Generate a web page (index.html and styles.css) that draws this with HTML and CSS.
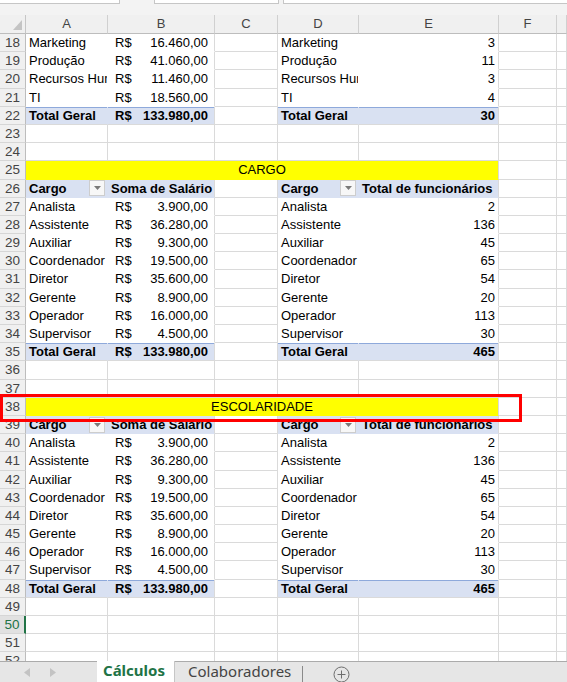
FILE: index.html
```html
<!DOCTYPE html>
<html lang="pt-BR">
<head>
    <meta charset="UTF-8">
    <title>Cálculos</title>
    <link rel="stylesheet" href="styles.css">
</head>
<body>
  <div class="topbar">
    <div class="box box1"></div>
    <div class="box box2"></div>
    <div class="box box3"></div>
  </div>

  <div class="sheet">
    <div class="row colhead">
      <div class="corner"><svg width="9" height="10" viewBox="0 0 9 10"><polygon points="9,0 9,10 0,10" fill="#c4c4c4"/></svg></div>
      <div class="ch">A</div><div class="ch">B</div><div class="ch">C</div><div class="ch">D</div><div class="ch">E</div><div class="ch">F</div><div class="ch"></div>
    </div>

    <!-- departamentos -->
    <div class="row"><div class="rh">18</div><div class="c pv in">Marketing</div><div class="c pv last money"><span>R$</span><span>16.460,00</span></div><div class="c"></div><div class="c pv in">Marketing</div><div class="c pv last num">3</div><div class="c"></div><div class="c"></div></div>
    <div class="row"><div class="rh">19</div><div class="c pv in">Produção</div><div class="c pv last money"><span>R$</span><span>41.060,00</span></div><div class="c"></div><div class="c pv in">Produção</div><div class="c pv last num">11</div><div class="c"></div><div class="c"></div></div>
    <div class="row"><div class="rh">20</div><div class="c pv in clip">Recursos Humanos</div><div class="c pv last money"><span>R$</span><span>11.460,00</span></div><div class="c"></div><div class="c pv in clip">Recursos Humanos</div><div class="c pv last num">3</div><div class="c"></div><div class="c"></div></div>
    <div class="row"><div class="rh">21</div><div class="c pv in">TI</div><div class="c pv last money"><span>R$</span><span>18.560,00</span></div><div class="c"></div><div class="c pv in">TI</div><div class="c pv last num">4</div><div class="c"></div><div class="c"></div></div>
    <div class="row"><div class="rh">22</div><div class="c tot">Total Geral</div><div class="c tot last money"><span>R$</span><span>133.980,00</span></div><div class="c"></div><div class="c tot">Total Geral</div><div class="c tot last num">30</div><div class="c"></div><div class="c"></div></div>
    <div class="row"><div class="rh">23</div><div class="c"></div><div class="c"></div><div class="c"></div><div class="c"></div><div class="c"></div><div class="c"></div><div class="c"></div></div>
    <div class="row"><div class="rh">24</div><div class="c"></div><div class="c"></div><div class="c"></div><div class="c"></div><div class="c"></div><div class="c"></div><div class="c"></div></div>

    <!-- cargo -->
    <div class="row"><div class="rh">25</div><div class="c band">CARGO</div><div class="c"></div><div class="c"></div></div>
    <div class="row"><div class="rh">26</div><div class="c hd filt"><span>Cargo</span><span class="dd"><svg width="7" height="4" viewBox="0 0 7 4"><polygon points="0,0 7,0 3.5,4" fill="#7a7a7a"/></svg></span></div><div class="c hd last">Soma de Salário</div><div class="c"></div><div class="c hd filt"><span>Cargo</span><span class="dd"><svg width="7" height="4" viewBox="0 0 7 4"><polygon points="0,0 7,0 3.5,4" fill="#7a7a7a"/></svg></span></div><div class="c hd last">Total de funcionários</div><div class="c"></div><div class="c"></div></div>
    <div class="row"><div class="rh">27</div><div class="c pv in">Analista</div><div class="c pv last money"><span>R$</span><span>3.900,00</span></div><div class="c"></div><div class="c pv in">Analista</div><div class="c pv last num">2</div><div class="c"></div><div class="c"></div></div>
    <div class="row"><div class="rh">28</div><div class="c pv in">Assistente</div><div class="c pv last money"><span>R$</span><span>36.280,00</span></div><div class="c"></div><div class="c pv in">Assistente</div><div class="c pv last num">136</div><div class="c"></div><div class="c"></div></div>
    <div class="row"><div class="rh">29</div><div class="c pv in">Auxiliar</div><div class="c pv last money"><span>R$</span><span>9.300,00</span></div><div class="c"></div><div class="c pv in">Auxiliar</div><div class="c pv last num">45</div><div class="c"></div><div class="c"></div></div>
    <div class="row"><div class="rh">30</div><div class="c pv in">Coordenador</div><div class="c pv last money"><span>R$</span><span>19.500,00</span></div><div class="c"></div><div class="c pv in">Coordenador</div><div class="c pv last num">65</div><div class="c"></div><div class="c"></div></div>
    <div class="row"><div class="rh">31</div><div class="c pv in">Diretor</div><div class="c pv last money"><span>R$</span><span>35.600,00</span></div><div class="c"></div><div class="c pv in">Diretor</div><div class="c pv last num">54</div><div class="c"></div><div class="c"></div></div>
    <div class="row"><div class="rh">32</div><div class="c pv in">Gerente</div><div class="c pv last money"><span>R$</span><span>8.900,00</span></div><div class="c"></div><div class="c pv in">Gerente</div><div class="c pv last num">20</div><div class="c"></div><div class="c"></div></div>
    <div class="row"><div class="rh">33</div><div class="c pv in">Operador</div><div class="c pv last money"><span>R$</span><span>16.000,00</span></div><div class="c"></div><div class="c pv in">Operador</div><div class="c pv last num">113</div><div class="c"></div><div class="c"></div></div>
    <div class="row"><div class="rh">34</div><div class="c pv in">Supervisor</div><div class="c pv last money"><span>R$</span><span>4.500,00</span></div><div class="c"></div><div class="c pv in">Supervisor</div><div class="c pv last num">30</div><div class="c"></div><div class="c"></div></div>
    <div class="row"><div class="rh">35</div><div class="c tot">Total Geral</div><div class="c tot last money"><span>R$</span><span>133.980,00</span></div><div class="c"></div><div class="c tot">Total Geral</div><div class="c tot last num">465</div><div class="c"></div><div class="c"></div></div>
    <div class="row"><div class="rh">36</div><div class="c"></div><div class="c"></div><div class="c"></div><div class="c"></div><div class="c"></div><div class="c"></div><div class="c"></div></div>
    <div class="row"><div class="rh">37</div><div class="c"></div><div class="c"></div><div class="c"></div><div class="c"></div><div class="c"></div><div class="c"></div><div class="c"></div></div>

    <!-- escolaridade -->
    <div class="row"><div class="rh">38</div><div class="c band">ESCOLARIDADE</div><div class="c"></div><div class="c"></div></div>
    <div class="row"><div class="rh">39</div><div class="c hd filt"><span>Cargo</span><span class="dd"><svg width="7" height="4" viewBox="0 0 7 4"><polygon points="0,0 7,0 3.5,4" fill="#7a7a7a"/></svg></span></div><div class="c hd last">Soma de Salário</div><div class="c"></div><div class="c hd filt"><span>Cargo</span><span class="dd"><svg width="7" height="4" viewBox="0 0 7 4"><polygon points="0,0 7,0 3.5,4" fill="#7a7a7a"/></svg></span></div><div class="c hd last">Total de funcionários</div><div class="c"></div><div class="c"></div></div>
    <div class="row"><div class="rh">40</div><div class="c pv in">Analista</div><div class="c pv last money"><span>R$</span><span>3.900,00</span></div><div class="c"></div><div class="c pv in">Analista</div><div class="c pv last num">2</div><div class="c"></div><div class="c"></div></div>
    <div class="row"><div class="rh">41</div><div class="c pv in">Assistente</div><div class="c pv last money"><span>R$</span><span>36.280,00</span></div><div class="c"></div><div class="c pv in">Assistente</div><div class="c pv last num">136</div><div class="c"></div><div class="c"></div></div>
    <div class="row"><div class="rh">42</div><div class="c pv in">Auxiliar</div><div class="c pv last money"><span>R$</span><span>9.300,00</span></div><div class="c"></div><div class="c pv in">Auxiliar</div><div class="c pv last num">45</div><div class="c"></div><div class="c"></div></div>
    <div class="row"><div class="rh">43</div><div class="c pv in">Coordenador</div><div class="c pv last money"><span>R$</span><span>19.500,00</span></div><div class="c"></div><div class="c pv in">Coordenador</div><div class="c pv last num">65</div><div class="c"></div><div class="c"></div></div>
    <div class="row"><div class="rh">44</div><div class="c pv in">Diretor</div><div class="c pv last money"><span>R$</span><span>35.600,00</span></div><div class="c"></div><div class="c pv in">Diretor</div><div class="c pv last num">54</div><div class="c"></div><div class="c"></div></div>
    <div class="row"><div class="rh">45</div><div class="c pv in">Gerente</div><div class="c pv last money"><span>R$</span><span>8.900,00</span></div><div class="c"></div><div class="c pv in">Gerente</div><div class="c pv last num">20</div><div class="c"></div><div class="c"></div></div>
    <div class="row"><div class="rh">46</div><div class="c pv in">Operador</div><div class="c pv last money"><span>R$</span><span>16.000,00</span></div><div class="c"></div><div class="c pv in">Operador</div><div class="c pv last num">113</div><div class="c"></div><div class="c"></div></div>
    <div class="row"><div class="rh">47</div><div class="c pv in">Supervisor</div><div class="c pv last money"><span>R$</span><span>4.500,00</span></div><div class="c"></div><div class="c pv in">Supervisor</div><div class="c pv last num">30</div><div class="c"></div><div class="c"></div></div>
    <div class="row"><div class="rh">48</div><div class="c tot">Total Geral</div><div class="c tot last money"><span>R$</span><span>133.980,00</span></div><div class="c"></div><div class="c tot">Total Geral</div><div class="c tot last num">465</div><div class="c"></div><div class="c"></div></div>
    <div class="row"><div class="rh">49</div><div class="c"></div><div class="c"></div><div class="c"></div><div class="c"></div><div class="c"></div><div class="c"></div><div class="c"></div></div>
    <div class="row"><div class="rh sel">50</div><div class="c"></div><div class="c"></div><div class="c"></div><div class="c"></div><div class="c"></div><div class="c"></div><div class="c"></div></div>
    <div class="row"><div class="rh">51</div><div class="c"></div><div class="c"></div><div class="c"></div><div class="c"></div><div class="c"></div><div class="c"></div><div class="c"></div></div>
    <div class="row"><div class="rh">52</div><div class="c"></div><div class="c"></div><div class="c"></div><div class="c"></div><div class="c"></div><div class="c"></div><div class="c"></div></div>
  </div>

  <!-- destaque em volta da linha 38 -->
  <div class="mark"></div>

  <div class="tabs">
    <div class="nav">
      <svg width="6" height="9" viewBox="0 0 6 9"><polygon points="6,0 6,9 0,4.5" fill="#c3c3c3"/></svg>
      <svg width="6" height="9" viewBox="0 0 6 9"><polygon points="0,0 0,9 6,4.5" fill="#c3c3c3"/></svg>
    </div>
    <div class="tab active">Cálculos</div>
    <div class="tab">Colaboradores</div>
    <div class="add">
      <svg width="17" height="17" viewBox="0 0 17 17"><circle cx="8.5" cy="8.5" r="7.5" fill="none" stroke="#6e6e6e" stroke-width="1"/><path d="M8.5 4.5v8M4.5 8.5h8" stroke="#6e6e6e" stroke-width="1"/></svg>
    </div>
  </div>
</body>
</html>
```

FILE: styles.css
```css
* {
  box-sizing: border-box;
}

body {
  margin: 0;
  width: 567px;
  height: 682px;
  overflow: hidden;
  position: relative;
  font-family: "Liberation Sans", Arial, sans-serif;
  font-size: 13px;
  color: #000;
  background: #fff;
}

/* strip of the formula bar above the grid */
.topbar {
  height: 15px;
  background: #f3f3f3;
  display: flex;
  align-items: flex-start;
}
.topbar .box {
  height: 5px;
  margin-top: -1px;
  background: #fff;
  border: 1px solid #c6c6c6;
}
.box1 { width: 121px; margin-left: -1px; }
.box2 { width: 125px; margin-left: 34px; }
.box3 { flex: 1; margin-left: 4px; margin-right: -1px; }

/* grid */
.sheet {
  height: 646px;
  overflow: hidden;
}
.row {
  display: grid;
  grid-template-columns: 26px 82px 107px 63px 81px 140px 58px 1fr;
  height: 18.2px;
}
.colhead {
  height: 19px;
  background: #f0f0f0;
}
.corner {
  border-right: 1px solid #c6c6c6;
  border-bottom: 1px solid #bdbdbd;
  display: flex;
  align-items: flex-end;
  justify-content: flex-end;
  padding: 0 3px 3px 0;
}
.ch {
  border-right: 1px solid #d0d0d0;
  border-bottom: 1px solid #bdbdbd;
  text-align: center;
  color: #444;
  line-height: 18px;
}
.rh {
  background: #f0f0f0;
  border-right: 1px solid #bdbdbd;
  border-bottom: 1px solid #d6d6d6;
  text-align: center;
  color: #444;
  line-height: 17px;
  font-size: 13.5px;
}
.rh.sel {
  background: #e1e1e1;
  color: #217346;
  border-right: 2px solid #217346;
}

.c {
  border-right: 1px solid #dadada;
  border-bottom: 1px solid #dadada;
  padding: 0 3px;
  white-space: nowrap;
  overflow: hidden;
  line-height: 17px;
}
.clip {
  text-overflow: clip;
}

/* pivot tables */
.pv {
  border-bottom-color: #fff;
}
.pv.in {
  border-right-color: #fff;
}
.hd {
  background: #d9e1f2;
  border-right-color: #d9e1f2;
  border-bottom-color: #d9e1f2;
  font-weight: bold;
}
.tot {
  background: #d9e1f2;
  border-right-color: #d9e1f2;
  font-weight: bold;
  box-shadow: inset 0 1px 0 #8ea9db;
}
.c.last {
  border-right-color: #dadada;
}
.filt {
  display: flex;
  justify-content: space-between;
  align-items: center;
  padding-right: 2px;
}
.dd {
  width: 16px;
  height: 16px;
  background: #f7f7f7;
  border: 1px solid #cdcdcd;
  display: flex;
  align-items: center;
  justify-content: center;
}
.money {
  display: flex;
  justify-content: space-between;
  padding: 0 6px 0 7px;
}
.num {
  text-align: right;
}

.band {
  grid-column: 2 / 7;
  background: #ffff00;
  border-bottom-color: #ffff00;
  text-align: center;
}

.mark {
  position: absolute;
  left: 0;
  top: 394px;
  width: 522px;
  height: 28px;
  border: 3px solid #ff0000;
}

/* sheet tabs */
.tabs {
  height: 21px;
  background: #e6e6e6;
  border-top: 1px solid #ababab;
  display: flex;
  font-family: "Noto Sans", sans-serif;
  font-size: 15px;
  line-height: 18px;
}
.nav {
  width: 97px;
  display: flex;
  align-items: center;
  gap: 20px;
  padding-left: 24px;
}
.tab {
  color: #444;
  padding: 0 11px 0 13px;
}
.tab.active {
  width: 78px;
  margin-top: -1px;
  padding: 0 0 0 6px;
  background: #fff;
  color: #217346;
  font-weight: bold;
  border-right: 1px solid #c6c6c6;
}
.add {
  border-left: 1px solid #8a8a8a;
  margin-top: 4px;
  padding-left: 30px;
  display: flex;
  align-items: center;
  height: 16px;
}
```
